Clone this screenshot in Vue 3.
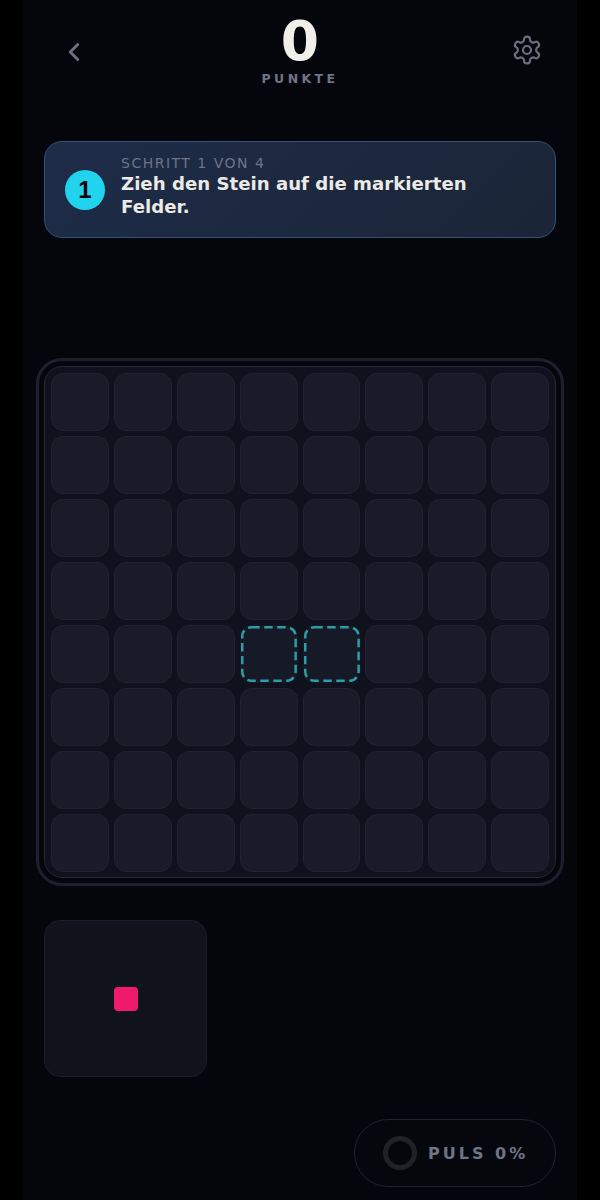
<template>
  <div class="page">
    <div class="game">
      <header class="top">
        <button class="icon-btn back" aria-label="Zurück">
          <svg width="30" height="30" viewBox="0 0 24 24" fill="none" stroke="currentColor" stroke-width="2.4" stroke-linecap="round" stroke-linejoin="round">
            <path d="m15 18-6-6 6-6" />
          </svg>
        </button>
        <div class="score">
          <div class="score-num">0</div>
          <div class="score-label">PUNKTE</div>
        </div>
        <button class="icon-btn gear" aria-label="Einstellungen">
          <svg width="32" height="32" viewBox="0 0 24 24" fill="none" stroke="currentColor" stroke-width="1.6" stroke-linecap="round" stroke-linejoin="round">
            <path d="M12.22 2h-.44a2 2 0 0 0-2 2v.18a2 2 0 0 1-1 1.73l-.43.25a2 2 0 0 1-2 0l-.15-.08a2 2 0 0 0-2.73.73l-.22.38a2 2 0 0 0 .73 2.73l.15.1a2 2 0 0 1 1 1.72v.51a2 2 0 0 1-1 1.74l-.15.09a2 2 0 0 0-.73 2.73l.22.38a2 2 0 0 0 2.73.73l.15-.08a2 2 0 0 1 2 0l.43.25a2 2 0 0 1 1 1.73V20a2 2 0 0 0 2 2h.44a2 2 0 0 0 2-2v-.18a2 2 0 0 1 1-1.73l.43-.25a2 2 0 0 1 2 0l.15.08a2 2 0 0 0 2.73-.73l.22-.39a2 2 0 0 0-.73-2.73l-.15-.08a2 2 0 0 1-1-1.74v-.5a2 2 0 0 1 1-1.74l.15-.09a2 2 0 0 0 .73-2.73l-.22-.38a2 2 0 0 0-2.73-.73l-.15.08a2 2 0 0 1-2 0l-.43-.25a2 2 0 0 1-1-1.73V4a2 2 0 0 0-2-2z" />
            <circle cx="12" cy="12" r="3" />
          </svg>
        </button>
      </header>

      <section class="hint">
        <div class="hint-num">1</div>
        <div class="hint-text">
          <div class="hint-step">SCHRITT 1 VON 4</div>
          <div class="hint-title">Zieh den Stein auf die markierten Felder.</div>
        </div>
      </section>

      <section class="board">
        <div class="grid">
          <div v-for="c in cells" :key="c" class="cell" :class="{ target: targets.includes(c) }">
            <svg v-if="targets.includes(c)" class="dash" viewBox="0 0 58 58">
              <rect x="2.25" y="2.25" width="53.5" height="53.5" rx="9" ry="9" />
            </svg>
          </div>
        </div>
      </section>

      <section class="tray">
        <div class="stone"></div>
      </section>

      <footer class="bottom">
        <div class="pulse">
          <div class="ring"></div>
          <span class="pulse-text">PULS 0%</span>
        </div>
      </footer>
    </div>
  </div>
</template>

<script setup>
const cells = Array.from({ length: 64 }, (_, i) => i)
// the two marked fields in row 5
const targets = [35, 36]
</script>

<style>
html, body {
  background: #000;
}
</style>

<style scoped>
.page {
  height: 1200px;
  background: #000;
  display: flex;
  justify-content: center;
  overflow: hidden;
  font-family: "DejaVu Sans", sans-serif;
}

.game {
  width: 554px;
  height: 1200px;
  box-sizing: border-box;
  background: #05060b;
  padding: 0 21px;
  display: flex;
  flex-direction: column;
}

.top {
  height: 88px;
  padding: 0 13px;
  display: grid;
  grid-template-columns: 1fr auto 1fr;
  align-items: start;
}

.icon-btn {
  padding: 0;
  border: 0;
  background: none;
  color: #6b7080;
  display: flex;
}

.back {
  margin: 37px 0 0 2px;
  justify-self: start;
}

.gear {
  margin-top: 34px;
  justify-self: end;
}

.score {
  text-align: center;
  padding-top: 12px;
}

.score-num {
  font-size: 55px;
  line-height: 59px;
  font-weight: 700;
  color: #f1efe9;
}

.score-label {
  font-size: 12.5px;
  line-height: 16px;
  font-weight: 700;
  letter-spacing: 3.4px;
  color: #6f7488;
}

.hint {
  margin-top: 53px;
  height: 97px;
  box-sizing: border-box;
  border: 1px solid #34507a;
  border-radius: 18px;
  background: linear-gradient(135deg, #1e2c48, #1b2537);
  padding: 0 20px;
  display: flex;
  align-items: center;
  gap: 16px;
}

.hint-num {
  width: 40px;
  height: 40px;
  flex: none;
  border-radius: 50%;
  background: #22d3ee;
  color: #05060b;
  font-family: "Liberation Sans", sans-serif;
  font-size: 24px;
  font-weight: 700;
  display: flex;
  align-items: center;
  justify-content: center;
}

.hint-text {
  padding-bottom: 6px;
}

.hint-step {
  font-size: 14px;
  line-height: 16px;
  letter-spacing: 1.5px;
  color: #6f7488;
}

.hint-title {
  margin-top: 1px;
  font-size: 18.15px;
  line-height: 23.5px;
  font-weight: 700;
  color: #eceae6;
}

.board {
  margin: 120px -8px 0;
  height: 528px;
  box-sizing: border-box;
  border: 3px solid #1c202e;
  border-radius: 26px;
  padding: 5px;
  flex: none;
}

.grid {
  height: 100%;
  box-sizing: border-box;
  background: #0f121d;
  border: 1px solid #242837;
  border-radius: 18px;
  padding: 6px 6px 5px;
  display: grid;
  grid-template-columns: repeat(8, 1fr);
  grid-template-rows: repeat(8, 1fr);
  gap: 5px;
}

.cell {
  position: relative;
  box-sizing: border-box;
  background: #191c28;
  border: 1px solid #1f2330;
  border-radius: 12px;
}

.cell.target {
  border-color: transparent;
  background: #161a26;
}

.dash {
  position: absolute;
  inset: -1px;
  width: calc(100% + 2px);
  height: calc(100% + 2px);
}

.dash rect {
  fill: none;
  stroke: #2f9aa8;
  stroke-width: 2.5;
  stroke-dasharray: 8.5 4.5;
}

.tray {
  margin-top: 34px;
  width: 163px;
  height: 157px;
  box-sizing: border-box;
  background: #10131c;
  border: 1px solid #1a1d28;
  border-radius: 16px;
  display: flex;
  align-items: center;
  justify-content: center;
}

.stone {
  width: 24px;
  height: 24px;
  border-radius: 4px;
  background: #ef1a6c;
}

.bottom {
  margin-top: 42px;
  display: flex;
  justify-content: flex-end;
}

.pulse {
  width: 202px;
  height: 68px;
  box-sizing: border-box;
  border: 1px solid #1f2230;
  border-radius: 34px;
  background: #06070d;
  padding-left: 28px;
  display: flex;
  align-items: center;
  gap: 11px;
}

.ring {
  width: 34px;
  height: 34px;
  box-sizing: border-box;
  border: 5px solid #212228;
  border-radius: 50%;
}

.pulse-text {
  font-size: 16px;
  font-weight: 700;
  letter-spacing: 3px;
  color: #6f7488;
}
</style>
